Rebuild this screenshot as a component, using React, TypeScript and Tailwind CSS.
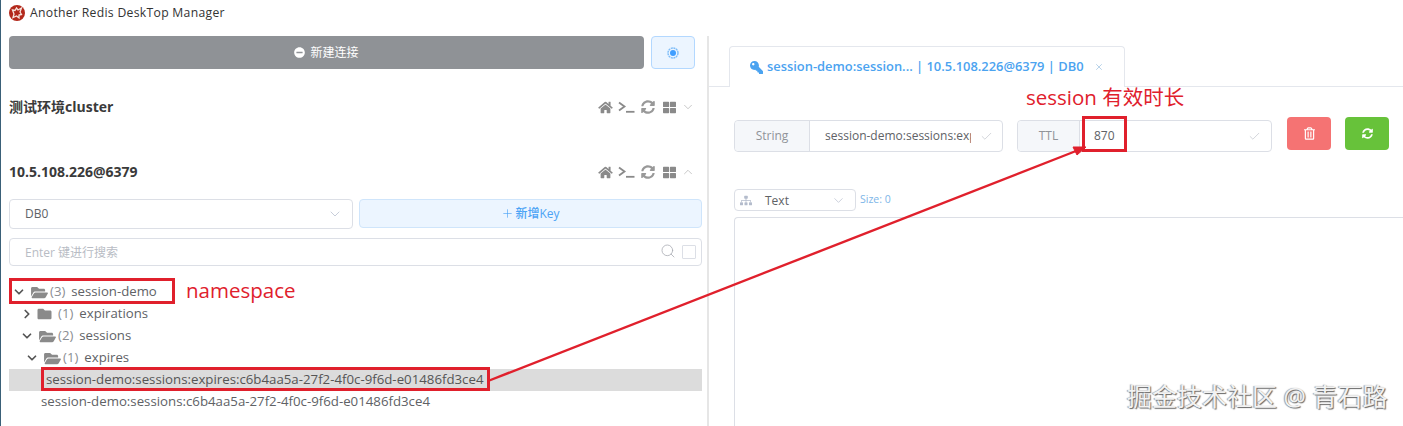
import React from 'react';
import { ChevronDown, ChevronRight, ChevronUp, Check, Plus, Search, X } from 'lucide-react';
import {
  FaHome,
  FaSyncAlt,
  FaThLarge,
  FaFolder,
  FaFolderOpen,
  FaKey,
  FaSitemap,
  FaRegTrashAlt,
  FaMinusCircle,
} from 'react-icons/fa';

const Terminal = () => (
  <svg width="17" height="12" viewBox="0 0 17 12" fill="none" stroke="#8a8a8a" strokeWidth="1.8">
    <path d="M1 1.5 L6.5 5.5 L1 9.5" />
    <path d="M8 10.8 H16.5" />
  </svg>
);

const ConnectionHeader = ({ title, open }: { title: string; open?: boolean }) => (
  <div className="flex items-center justify-between h-[20px] pr-[7px]">
    <span className="text-[14px] font-bold text-[#3a3a3a] -mt-[2px]">{title}</span>
    <div className="flex items-center text-[#8a8a8a]">
      <FaHome className="w-[15px] h-[13px]" />
      <span className="ml-[5px] flex">
        <Terminal />
      </span>
      <FaSyncAlt className="ml-[6px] w-[14px] h-[14px] text-[#999]" />
      <FaThLarge className="ml-[8px] w-[13px] h-[13px]" />
      {open ? (
        <ChevronUp className="ml-[5px] w-[14px] h-[14px] text-[#aaa]" strokeWidth={1.1} />
      ) : (
        <ChevronDown className="ml-[5px] w-[14px] h-[14px] text-[#aaa]" strokeWidth={1.1} />
      )}
    </div>
  </div>
);

const TreeRow = ({
  indent,
  open,
  count,
  label,
}: {
  indent: string;
  open: boolean;
  count: number;
  label: string;
}) => (
  <div className={`flex items-center h-[22px] text-[13.2px] text-[#606266] ${indent}`}>
    {open ? (
      <ChevronDown className="w-[14px] h-[14px] text-[#555]" strokeWidth={3} />
    ) : (
      <ChevronRight className="w-[14px] h-[14px] text-[#555]" strokeWidth={3} />
    )}
    {open ? (
      <FaFolderOpen className="ml-[5px] w-[17px] h-[15px] text-[#8a8a8a]" />
    ) : (
      <FaFolder className="ml-[3px] w-[15px] h-[14px] text-[#8a8a8a] mr-[4px]" />
    )}
    <span className="ml-[2px] text-[#8a8d92]">({count})</span>
    <span className="ml-[6px]">{label}</span>
  </div>
);

export default function App() {
  return (
    <div
      className="relative h-[426px] w-[1403px] overflow-hidden bg-white border-l border-[#3a6078]"
      style={{ fontFamily: '"Open Sans", "Noto Sans CJK SC", sans-serif' }}
    >
      <div className="flex items-center h-[26px] pl-[8px] text-[12.2px] text-[#333]">
        <svg width="16" height="16" viewBox="0 0 16 16">
          <circle cx="8" cy="8" r="8" fill="#b3291c" />
          <path
            d="M3.5 5 L6 5.5 L7.5 3 L9 5 L12.5 3 L11 7 L12.5 9.5 L10 10 L10 13 L7.5 11 L4 12.5 L5 9 L3.5 5 Z"
            stroke="#f6e6df"
            strokeWidth="1.3"
            fill="none"
          />
        </svg>
        <span className="ml-[5px] tracking-[0.3px]">Another Redis DeskTop Manager</span>
      </div>

      <div className="flex h-[390px] mt-[10px]">
        {/* left side: connections */}
        <div className="w-[708px] shrink-0 pl-[8px] pr-[5px] border-r-2 border-[#e6e6e6]">
          <div className="flex gap-[7px] pr-[7px]">
            <button className="flex-1 h-[33px] rounded-[4px] bg-[#8f9296] text-white text-[12px] flex items-center justify-center">
              <FaMinusCircle className="w-[11px] h-[11px] mr-[5px]" />
              新建连接
            </button>
            <button className="w-[44px] h-[33px] rounded-[4px] bg-[#ecf5ff] border border-[#b3d8ff] flex items-center justify-center">
              <svg width="12" height="12" viewBox="0 0 12 12" fill="none">
                <circle cx="6" cy="6" r="5" stroke="#7dbcf8" strokeWidth="1.4" strokeDasharray="2 0.6" />
                <circle cx="6" cy="6" r="3" fill="#409eff" />
              </svg>
            </button>
          </div>

          <div className="mt-[28px]">
            <ConnectionHeader title="测试环境cluster" />
          </div>
          <div className="mt-[45px]">
            <ConnectionHeader title="10.5.108.226@6379" open />
          </div>

          <div className="mt-[17px] flex gap-[6px]">
            <div className="w-[344px] h-[30px] rounded-[4px] border border-[#dcdfe6] flex items-center justify-between pl-[15px] pr-[9px] text-[12px] text-[#606266]">
              DB0
              <ChevronDown className="w-[16px] h-[16px] text-[#b4bccc]" strokeWidth={1.1} />
            </div>
            <button className="flex-1 h-[29px] rounded-[4px] bg-[#ecf5ff] border border-[#cfe5fb] text-[#4ba3f5] text-[12px] flex items-center justify-center">
              <Plus className="w-[13px] h-[13px] mr-[1px]" strokeWidth={1.2} />
              <span className="font-medium">新增Key</span>
            </button>
          </div>

          <div className="mt-[9px] h-[28px] rounded-[4px] border border-[#dcdfe6] flex items-center pl-[15px] pr-[5px] text-[12px] text-[#b8bcc4]">
            <span className="flex-1 pt-[1px]">Enter 键进行搜索</span>
            <Search className="w-[16px] h-[16px] text-[#a8abb2] -mt-[2px]" strokeWidth={1.2} />
            <span className="ml-[6px] w-[14px] h-[14px] border border-[#dcdfe6] rounded-[1px]" />
          </div>

          <div className="mt-[15px]">
            <TreeRow indent="pl-[3px]" open count={3} label="session-demo" />
            <TreeRow indent="pl-[11px]" open={false} count={1} label="expirations" />
            <TreeRow indent="pl-[11px]" open count={2} label="sessions" />
            <TreeRow indent="pl-[16px]" open count={1} label="expires" />
            <div className="h-[22px] bg-[#dcdcdc] flex items-center pl-[37px] text-[13.25px] text-[#555]">
              session-demo:sessions:expires:c6b4aa5a-27f2-4f0c-9f6d-e01486fd3ce4
            </div>
            <div className="h-[22px] flex items-center pl-[32px] text-[13.25px] text-[#606266]">
              session-demo:sessions:c6b4aa5a-27f2-4f0c-9f6d-e01486fd3ce4
            </div>
          </div>
          <div className="mt-[21px] border-t border-[#e8e8e8]" />
        </div>

        {/* right side: key tab */}
        <div className="flex-1 min-w-0">
          <div className="flex mt-[10px] h-[41px] border-b border-[#e4e7ed]">
            <div className="ml-[20px] w-[396px] h-[41px] border border-b-0 border-[#e4e7ed] rounded-t-[4px] bg-white flex items-center pl-[20px] text-[12.9px] font-semibold text-[#4ba3f0]">
              <FaKey className="w-[13px] h-[13px] mr-[4px] -scale-x-100" />
              session-demo:session... | 10.5.108.226@6379 | DB0
              <X className="ml-[10px] w-[10px] h-[10px] text-[#8fb8dc]" strokeWidth={1.5} />
            </div>
          </div>

          <div className="flex mt-[33px] pl-[25px] items-start">
            <div className="flex w-[269px] h-[32px] rounded-[4px] border border-[#dcdfe6] text-[12px]">
              <div className="w-[75px] bg-[#f5f7fa] border-r border-[#dcdfe6] rounded-l-[4px] flex items-center justify-center text-[#909399]">
                String
              </div>
              <div className="flex-1 min-w-0 flex items-center pl-[15px] pr-[5px] text-[#606266]">
                <span className="w-[146px] overflow-hidden whitespace-nowrap">session-demo:sessions:expires</span>
                <Check className="ml-[9px] w-[13px] h-[13px] text-[#c0c4cc]" strokeWidth={1.3} />
              </div>
            </div>
            <div className="ml-[14px] flex w-[255px] h-[32px] rounded-[4px] border border-[#dcdfe6] text-[12px]">
              <div className="w-[62px] bg-[#f5f7fa] border-r border-[#dcdfe6] rounded-l-[4px] flex items-center justify-center text-[#909399]">
                TTL
              </div>
              <div className="flex-1 flex items-center justify-between pl-[14px] pr-[10px] text-[#606266]">
                870
                <Check className="w-[13px] h-[13px] text-[#c0c4cc]" strokeWidth={1.3} />
              </div>
            </div>
            <button className="ml-[15px] -mt-[3px] w-[44px] h-[33px] rounded-[4px] bg-[#f57373] flex items-center justify-center text-white">
              <FaRegTrashAlt className="w-[11px] h-[13px]" />
            </button>
            <button className="ml-[14px] -mt-[3px] w-[44px] h-[33px] rounded-[4px] bg-[#67c23a] flex items-center justify-center text-white">
              <FaSyncAlt className="w-[11px] h-[11px]" />
            </button>
          </div>

          <div className="flex items-center mt-[37px] pl-[25px]">
            <div className="w-[122px] h-[22px] rounded-[4px] border border-[#dcdfe6] flex items-center pl-[5px] pr-[9px] text-[12px] text-[#606266]">
              <FaSitemap className="w-[12px] h-[11px] text-[#b4bccc]" />
              <span className="ml-[13px] flex-1 pt-[1px]">Text</span>
              <ChevronDown className="w-[15px] h-[15px] text-[#b4bccc]" strokeWidth={1.1} />
            </div>
            <span className="ml-[4px] text-[10.5px] text-[#7db6e8]">Size: 0</span>
          </div>

          <div className="mt-[6px] ml-[25px] h-[300px] border-l border-t border-[#dcdfe6] rounded-tl-[4px]" />
        </div>
      </div>

      {/* annotations drawn over the screenshot */}
      <svg className="absolute left-[-1px] top-0 pointer-events-none" width="1403" height="426" fill="none">
        <path d="M488 381 L1076 151" stroke="#e0202c" strokeWidth="2.4" />
        <path d="M1086 147 L1073 147 L1077 155 Z" fill="#e0202c" stroke="#e0202c" />
      </svg>
      <div className="absolute left-[8px] top-[278px] w-[166px] h-[26px] border-[3px] border-[#e0202c]" />
      <div className="absolute left-[40px] top-[367px] w-[449px] h-[24px] border-[3px] border-[#e0202c]" />
      <div className="absolute left-[1081px] top-[116px] w-[45px] h-[36px] border-[3px] border-[#e0202c]" />
      <span className="absolute left-[185px] top-[275px] text-[20.5px] leading-[30px] text-[#e0202c]">namespace</span>
      <span className="absolute left-[1025px] top-[83px] text-[20.5px] leading-[28px] text-[#e0202c]">session 有效时长</span>
      <span className="absolute left-[1126px] top-[378px] text-[25px] leading-[36px] whitespace-nowrap text-[#f2f2f2] [text-shadow:1px_1px_1px_#666,-1px_0_1px_#999]">
        掘金技术社区 @ 青石路
      </span>
    </div>
  );
}
